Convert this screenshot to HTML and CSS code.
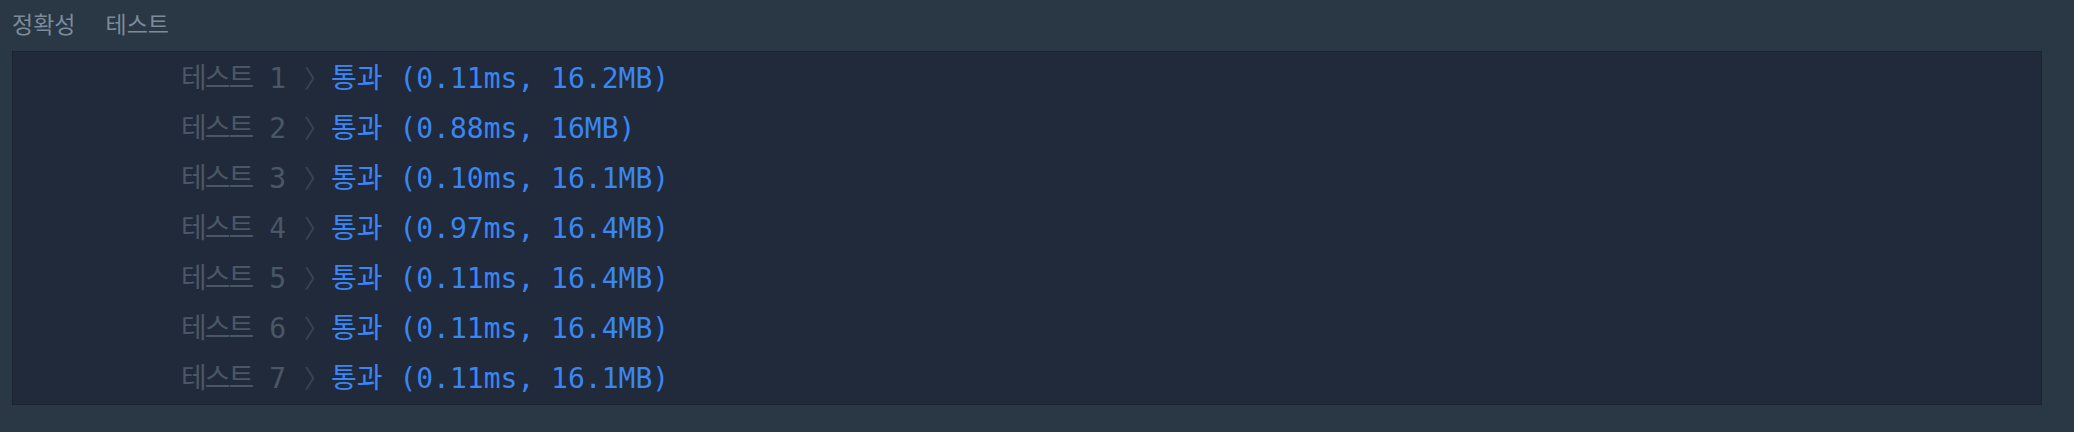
FILE: index.html
```html
<!DOCTYPE html>
<html lang="ko">
<head>
<meta charset="utf-8">
<link rel="stylesheet" href="styles.css">
</head>
<body>
<div class="tabs">
  <span class="tab">정확성</span>
  <span class="tab">테스트</span>
</div>
<div class="console">
  <div class="row"><span class="label"><span class="label-name">테스트</span> 1</span><span class="chev">〉</span><span class="result">통과 (0.11ms, 16.2MB)</span></div>
  <div class="row"><span class="label"><span class="label-name">테스트</span> 2</span><span class="chev">〉</span><span class="result">통과 (0.88ms, 16MB)</span></div>
  <div class="row"><span class="label"><span class="label-name">테스트</span> 3</span><span class="chev">〉</span><span class="result">통과 (0.10ms, 16.1MB)</span></div>
  <div class="row"><span class="label"><span class="label-name">테스트</span> 4</span><span class="chev">〉</span><span class="result">통과 (0.97ms, 16.4MB)</span></div>
  <div class="row"><span class="label"><span class="label-name">테스트</span> 5</span><span class="chev">〉</span><span class="result">통과 (0.11ms, 16.4MB)</span></div>
  <div class="row"><span class="label"><span class="label-name">테스트</span> 6</span><span class="chev">〉</span><span class="result">통과 (0.11ms, 16.4MB)</span></div>
  <div class="row"><span class="label"><span class="label-name">테스트</span> 7</span><span class="chev">〉</span><span class="result">통과 (0.11ms, 16.1MB)</span></div>
</div>
</body>
</html>
```
FILE: styles.css
```css
html, body {
  margin: 0;
  padding: 0;
}
body {
  background: #2a3745;
  width: 2074px;
  height: 432px;
  overflow: hidden;
}
.tabs {
  display: flex;
  gap: 30px;
  height: 46px;
  align-items: center;
  padding: 0 0 5px 12px;
  font-family: "Noto Sans CJK KR", "Noto Sans", sans-serif;
  font-size: 23px;
  color: #7b8b99;
}
.console {
  margin: 0 32px 0 12px;
  background: #212a3a;
  border: 1px solid #1b2331;
  padding: 2px 0 0 0;
  font-family: "DejaVu Sans Mono", "Noto Sans CJK KR", monospace;
  font-size: 28px;
}
.row {
  display: flex;
  align-items: center;
  height: 50px;
  padding-left: 168px;
  line-height: 1;
}
.label {
  color: #4a5767;
}
.label-name {
  letter-spacing: -2px;
}
.chev {
  color: #394555;
  font-family: "Noto Sans CJK KR", sans-serif;
  font-size: 25px;
  margin: -4px 4px 0 18px;
  width: 23px;
}
.result {
  color: #3a86f4;
}
```
